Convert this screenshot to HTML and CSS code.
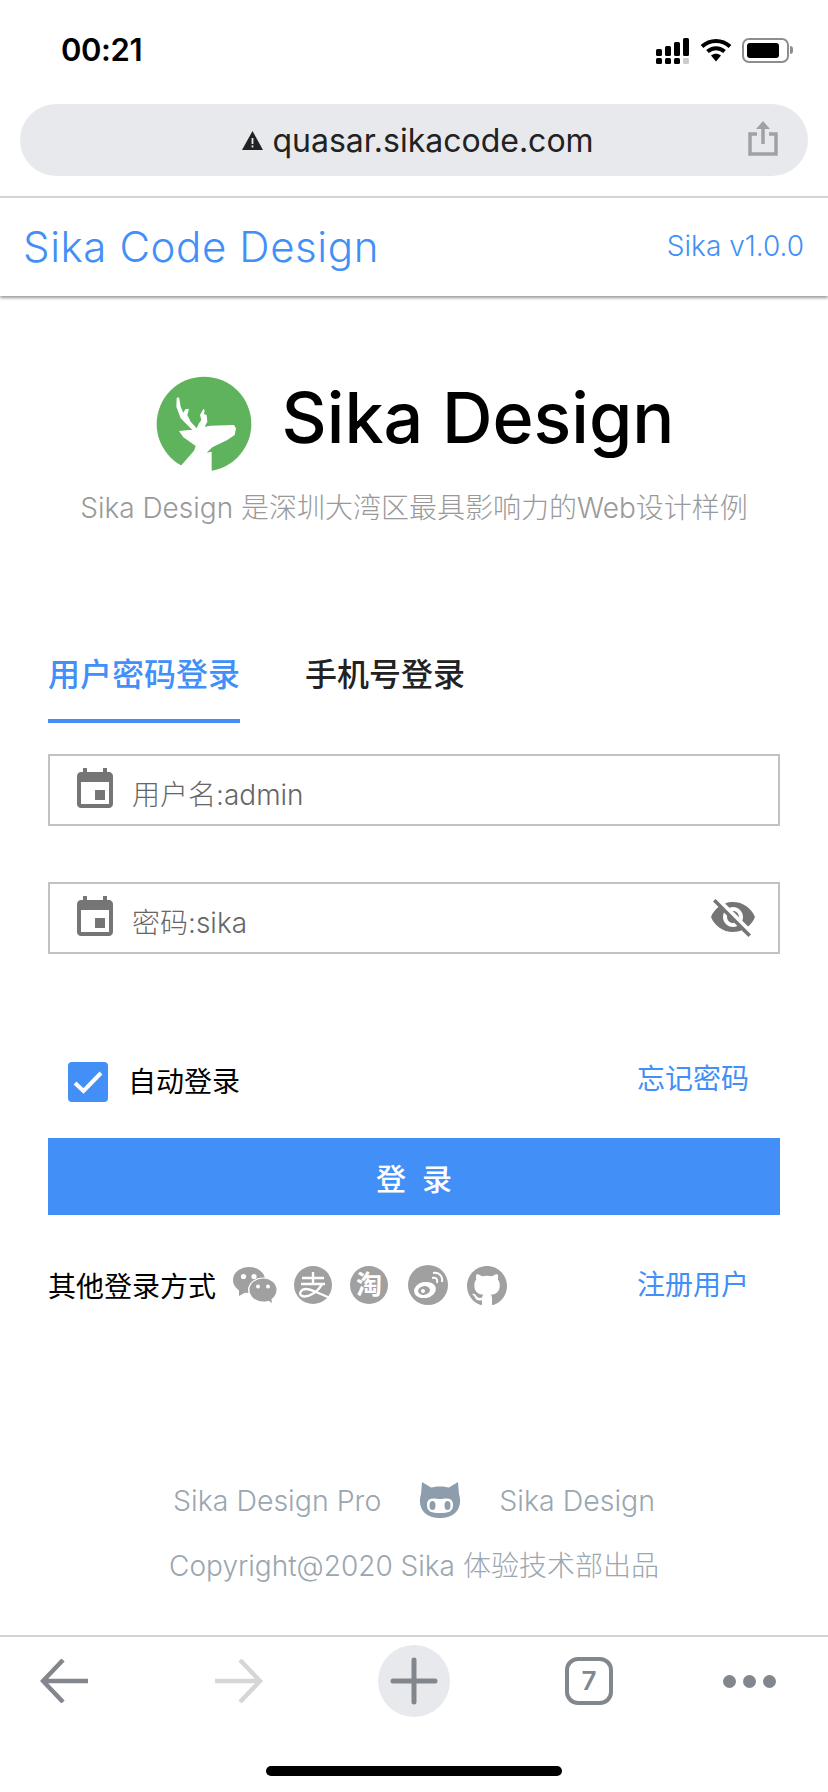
FILE: index.html
```html
<!DOCTYPE html>
<html lang="en">
<head>
    <meta charset="UTF-8">
    <meta name="viewport" content="width=device-width, initial-scale=1.0">
    <title>Sika Design</title>
    <link rel="stylesheet" href="styles.css">
</head>
<body>
    <div class="status-bar">
        <span class="time">00:21</span>
        <div class="status-icons">
            <svg class="signal" width="34" height="26" viewBox="0 0 34 26">
                <g fill="#000">
                    <rect x="0" y="11" width="6" height="7" rx="1.5"/>
                    <rect x="9" y="8" width="6" height="10" rx="1.5"/>
                    <rect x="18" y="4" width="6" height="14" rx="1.5"/>
                    <rect x="27" y="0" width="6" height="18" rx="1.5"/>
                    <rect x="0" y="20" width="6" height="6" rx="1.5"/>
                    <rect x="9" y="20" width="6" height="6" rx="1.5"/>
                    <rect x="18" y="20" width="6" height="6" rx="1.5"/>
                </g>
                <rect x="27" y="20" width="6" height="6" rx="1.5" fill="#ccc"/>
            </svg>
            <svg class="wifi" width="32" height="24" viewBox="0 0 32 24">
                <path d="M2 8.5C10 1 22 1 30 8.5" fill="none" stroke="#000" stroke-width="4"/>
                <path d="M7.5 13.5C12.5 9 19.5 9 24.5 13.5" fill="none" stroke="#000" stroke-width="4"/>
                <path d="M11 17.5L16 23.5L21 17.5C18 15 14 15 11 17.5Z" fill="#000"/>
            </svg>
            <div class="battery"><div class="battery-level"></div></div>
            <div class="battery-tip"></div>
        </div>
    </div>

    <div class="url-bar">
        <div class="url-text">
            <svg width="21" height="19" viewBox="0 0 21 19">
                <path d="M10.5 0L21 19H0Z" fill="#222"/>
                <rect x="9.6" y="7" width="1.8" height="6" fill="#e8e9ed"/>
                <rect x="9.6" y="14.4" width="1.8" height="2" fill="#e8e9ed"/>
            </svg>
            <span>quasar.sikacode.com</span>
        </div>
        <svg class="share" width="30" height="36" viewBox="0 0 30 36">
            <path d="M9 14H2V34H28V14H21" fill="none" stroke="#9ea1a6" stroke-width="3.5"/>
            <path d="M15 24V3" fill="none" stroke="#9ea1a6" stroke-width="3.5"/>
            <path d="M8 9L15 1L22 9Z" fill="#9ea1a6"/>
        </svg>
    </div>

    <header class="app-bar">
        <span class="app-title">Sika Code Design</span>
        <span class="app-version">Sika v1.0.0</span>
    </header>

    <main>
        <div class="brand">
            <svg class="logo" width="96" height="96" viewBox="76 48 288 288">
                <circle cx="220" cy="192" r="142" fill="#5fb35c"/>
                <path d="M138 114L145 112L150 140L158 158L165 147L175 147L170 165L180 185L198 205L205 190L212 180L208 165L218 147L222 150L220 162L228 165L230 185L222 200L240 197L310 195L316 205L312 225L290 240L245 262L228 278L243 275L243 345L130 345L150 318L190 272L195 258L170 240L158 232L145 213L175 210L185 210L150 175L137 140Z" fill="#fff"/>
            </svg>
            <h1 class="brand-name">Sika Design</h1>
        </div>
        <p class="brand-desc">Sika Design 是深圳大湾区最具影响力的Web设计样例</p>

        <div class="tabs">
            <div class="tab tab-active">用户密码登录</div>
            <div class="tab">手机号登录</div>
        </div>

        <div class="field">
            <svg class="field-icon" width="48" height="48" viewBox="0 0 24 24"><path d="M17 12h-5v5h5v-5zM16 1v2H8V1H6v2H5c-1.11 0-1.99.9-1.99 2L3 19c0 1.1.89 2 2 2h14c1.1 0 2-.9 2-2V5c0-1.1-.9-2-2-2h-1V1h-2zm3 18H5V8h14v11z"/></svg>
            <span class="field-text">用户名:admin</span>
        </div>
        <div class="field field-second">
            <svg class="field-icon" width="48" height="48" viewBox="0 0 24 24"><path d="M17 12h-5v5h5v-5zM16 1v2H8V1H6v2H5c-1.11 0-1.99.9-1.99 2L3 19c0 1.1.89 2 2 2h14c1.1 0 2-.9 2-2V5c0-1.1-.9-2-2-2h-1V1h-2zm3 18H5V8h14v11z"/></svg>
            <span class="field-text">密码:sika</span>
            <svg class="eye-icon" width="48" height="48" viewBox="0 0 24 24"><path d="M12 7c2.76 0 5 2.24 5 5 0 .65-.13 1.26-.36 1.83l2.92 2.92c1.51-1.26 2.7-2.89 3.43-4.75-1.73-4.39-6-7.5-11-7.5-1.4 0-2.74.25-3.98.7l2.16 2.16C10.74 7.13 11.35 7 12 7zM2 4.27l2.28 2.28.46.46C3.08 8.3 1.78 10.02 1 12c1.73 4.39 6 7.5 11 7.5 1.55 0 3.03-.3 4.38-.84l.42.42L19.73 22 21 20.73 3.27 3 2 4.27zM7.53 9.8l1.55 1.55c-.05.21-.08.43-.08.65 0 1.66 1.34 3 3 3 .22 0 .44-.03.65-.08l1.55 1.55c-.67.33-1.41.53-2.2.53-2.76 0-5-2.24-5-5 0-.79.2-1.53.53-2.2zm4.31-.78l3.15 3.15.02-.16c0-1.66-1.34-3-3-3l-.17.01z"/></svg>
        </div>

        <div class="remember-row">
            <div class="remember">
                <div class="checkbox">
                    <svg width="30" height="24" viewBox="0 0 30 24"><path d="M2 13L10.5 21L28 3" fill="none" stroke="#fff" stroke-width="4"/></svg>
                </div>
                <span class="remember-label">自动登录</span>
            </div>
            <a class="link link-up">忘记密码</a>
        </div>

        <button class="login-btn" type="button">登 录</button>

        <div class="other-row">
            <span class="other-label">其他登录方式</span>
            <div class="socials">
                <svg class="wechat" width="44" height="36" viewBox="0 0 44 36">
                    <ellipse cx="16" cy="13" rx="16" ry="13" fill="#a0a0a0"/>
                    <path d="M6 21L6 29L15 24Z" fill="#a0a0a0"/>
                    <circle cx="10.5" cy="9.5" r="2.6" fill="#fff"/>
                    <circle cx="21" cy="9.5" r="2.6" fill="#fff"/>
                    <ellipse cx="30" cy="23" rx="15" ry="12.5" fill="#fff"/>
                    <ellipse cx="30" cy="23" rx="13.5" ry="11.5" fill="#a0a0a0"/>
                    <path d="M33 32L39 36L38 30Z" fill="#a0a0a0"/>
                    <circle cx="25" cy="19.5" r="2" fill="#fff"/>
                    <circle cx="35" cy="19.5" r="2" fill="#fff"/>
                </svg>
                <svg class="alipay" width="38" height="38" viewBox="0 0 38 38">
                    <circle cx="19" cy="19" r="19" fill="#a0a0a0"/>
                    <path d="M8 12H30M19 6V18M7 18H31M28 18C24 26 14 32 8 30C4 28 7 23 12 23C18 23 27 29 37 32" fill="none" stroke="#fff" stroke-width="2.4"/>
                </svg>
                <span class="social-glyph">淘</span>
                <svg class="weibo" width="40" height="40" viewBox="0 0 40 40">
                    <circle cx="20" cy="20" r="20" fill="#a0a0a0"/>
                    <ellipse cx="17" cy="25" rx="11" ry="8" fill="#fff" transform="rotate(-10 17 25)"/>
                    <ellipse cx="16" cy="25.5" rx="6" ry="4.4" fill="#a0a0a0" transform="rotate(-10 16 25.5)"/>
                    <circle cx="15" cy="26" r="2" fill="#fff"/>
                    <path d="M24 13C28 12 30 14 29 18" fill="none" stroke="#fff" stroke-width="2"/>
                    <path d="M25 8C31 7 35 11 34 17" fill="none" stroke="#fff" stroke-width="2"/>
                </svg>
                <svg class="github" width="40" height="40" viewBox="0 0 16 16"><path fill="#a0a0a0" d="M8 0C3.58 0 0 3.58 0 8c0 3.54 2.29 6.53 5.47 7.59.4.07.55-.17.55-.38 0-.19-.01-.82-.01-1.49-2.01.37-2.53-.49-2.69-.94-.09-.23-.48-.94-.82-1.13-.28-.15-.68-.52-.01-.53.63-.01 1.08.58 1.23.82.72 1.21 1.87.87 2.33.66.07-.52.28-.87.51-1.07-1.78-.2-3.64-.89-3.64-3.95 0-.87.31-1.59.82-2.15-.08-.2-.36-1.02.08-2.12 0 0 .67-.21 2.2.82.64-.18 1.32-.27 2-.27.68 0 1.36.09 2 .27 1.53-1.04 2.2-.82 2.2-.82.44 1.1.16 1.92.08 2.12.51.56.82 1.27.82 2.15 0 3.07-1.87 3.75-3.65 3.95.29.25.54.73.54 1.48 0 1.07-.01 1.93-.01 2.2 0 .21.15.46.55.38A8.013 8.013 0 0016 8c0-4.42-3.58-8-8-8z"/></svg>
            </div>
            <a class="link">注册用户</a>
        </div>

        <footer class="page-footer">
            <div class="footer-links">
                <span>Sika Design Pro</span>
                <svg width="44" height="38" viewBox="0 0 44 38">
                    <path d="M4 1L13 6.500C18 5 26 5 31 6.500L40 1L41 13C45 26 38 37 22 37C6 37 -1 26 3 13Z" fill="#8d9dab"/>
                    <path d="M9 24C9 17 14 17 22 18C30 17 35 17 35 24C35 31 30 32 22 32C14 32 9 31 9 24Z" fill="#fff"/>
                    <ellipse cx="14.500" cy="24.500" rx="3" ry="4.500" fill="#8d9dab"/>
                    <ellipse cx="29.500" cy="24.500" rx="3" ry="4.500" fill="#8d9dab"/>
                </svg>
                <span>Sika Design</span>
            </div>
            <div class="copyright">Copyright@2020 Sika 体验技术部出品</div>
        </footer>
    </main>

    <nav class="browser-bar">
        <svg class="nav-back" width="48" height="44" viewBox="0 0 48 44"><path d="M48 22H3M23 1L3 22L23 43" fill="none" stroke="#81878c" stroke-width="4.500"/></svg>
        <svg class="nav-forward" width="48" height="44" viewBox="0 0 48 44"><path d="M0 22H45M25 1L45 22L25 43" fill="none" stroke="#d6d6d6" stroke-width="4.500"/></svg>
        <div class="new-tab">
            <svg width="48" height="48" viewBox="0 0 48 48"><path d="M24 3V45M3 24H45" fill="none" stroke="#81878c" stroke-width="5" stroke-linecap="round"/></svg>
        </div>
        <div class="tab-count">7</div>
        <div class="more"><i></i><i></i><i></i></div>
    </nav>
    <div class="home-bar"></div>
</body>
</html>
```

FILE: styles.css
```css
* {
    box-sizing: border-box;
}

body {
    font-family: Inter, "Noto Sans CJK SC", sans-serif;
    background-color: #fff;
    color: #000;
    margin: 0;
    width: 828px;
    height: 1792px;
    overflow: hidden;
}

.status-bar {
    height: 104px;
    padding: 32px 0 0 61px;
    display: flex;
    justify-content: space-between;
}

.time {
    font-size: 31px;
    font-weight: 600;
    line-height: 36px;
    letter-spacing: -0.4px;
}

.status-icons {
    display: flex;
    align-items: flex-start;
    padding: 5px 35px 0 0;
}

.signal {
    margin: 1px 10px 0 0;
}

.wifi {
    margin: 1px 10px 0 0;
}

.battery {
    width: 47px;
    height: 25px;
    margin-top: 1px;
    padding: 3px;
    border: 2px solid #8e8e8e;
    border-radius: 7px;
}

.battery-level {
    width: 32px;
    height: 15px;
    background-color: #000;
    border-radius: 3px;
}

.battery-tip {
    width: 3px;
    height: 8px;
    margin: 9px 0 0 1px;
    background-color: #8e8e8e;
    border-radius: 0 3px 3px 0;
}

.url-bar {
    height: 72px;
    margin: 0 20px;
    padding-right: 30px;
    background-color: #e8e9ed;
    border-radius: 36px;
    display: flex;
    align-items: center;
}

.url-text {
    flex: 1;
    display: flex;
    align-items: center;
    justify-content: center;
    padding-left: 68px;
    gap: 9px;
    font-size: 32px;
    color: #222;
}

.share {
    margin-top: -4px;
}

.app-bar {
    height: 100px;
    margin-top: 20px;
    padding: 0 24px 0 23px;
    border-top: 2px solid #d4d4d4;
    display: flex;
    align-items: center;
    justify-content: space-between;
    color: #428ff7;
    box-shadow: 0 2px 3px rgba(0, 0, 0, 0.4);
}

.app-title {
    font-size: 42px;
    font-weight: 300;
    letter-spacing: 0.6px;
    margin-top: -2px;
}

.app-version {
    font-size: 28px;
    font-weight: 300;
    margin-top: -2px;
}

main {
    height: 1339px;
    padding: 80px 48px 0;
}

.brand {
    display: flex;
    align-items: center;
    justify-content: center;
    gap: 30px;
    padding-left: 2px;
}

.brand-name {
    margin: -12px 0 0;
    font-size: 70px;
    font-weight: 550;
    line-height: 96px;
}

.brand-desc {
    margin: 16px 0 0;
    text-align: center;
    font-size: 28px;
    line-height: 40px;
    font-weight: 300;
    color: #999;
    white-space: nowrap;
}

.tabs {
    margin-top: 111px;
    display: flex;
    gap: 65px;
}

.tab {
    height: 84px;
    padding-top: 12px;
    font-size: 32px;
    line-height: 48px;
    font-weight: 500;
    color: #222;
}

.tab-active {
    color: #428ff7;
    border-bottom: 4px solid #428ff7;
}

.field {
    height: 72px;
    margin-top: 31px;
    padding: 0 21px;
    border: 2px solid #c2c2c2;
    display: flex;
    align-items: center;
}

.field-second {
    margin-top: 56px;
}

.field-icon {
    fill: #757575;
}

.eye-icon {
    fill: #757575;
    margin-left: auto;
    margin-top: -2px;
}

.field-text {
    margin: 6px 0 0 13px;
    font-size: 28px;
    font-weight: 300;
    color: #666;
}

.remember-row {
    height: 80px;
    margin-top: 88px;
    padding: 20px 31px 0 20px;
    display: flex;
    justify-content: space-between;
}

.remember {
    display: flex;
    align-items: center;
    gap: 20px;
    height: 40px;
    font-size: 28px;
}

.remember-label {
    margin-top: -4px;
}

.checkbox {
    width: 40px;
    height: 40px;
    background-color: #428ff7;
    border-radius: 4px;
    display: flex;
    align-items: center;
    justify-content: center;
}

.link {
    font-size: 28px;
    line-height: 40px;
    color: #428ff7;
}

.link-up {
    margin-top: -3px;
}

.login-btn {
    display: block;
    width: 100%;
    height: 77px;
    margin-top: 16px;
    padding-left: 10px;
    border: none;
    background-color: #428ff7;
    color: #fff;
    font-family: inherit;
    font-size: 30px;
    font-weight: 500;
    letter-spacing: 4px;
}

.other-row {
    margin-top: 49px;
    padding-right: 31px;
    height: 42px;
    display: flex;
    align-items: center;
}

.other-label {
    font-size: 28px;
}

.socials {
    display: flex;
    align-items: center;
    gap: 18px;
    margin-left: 17px;
}

.alipay {
    margin-left: -1px;
}

.social-glyph {
    width: 38px;
    height: 38px;
    border-radius: 50%;
    background-color: #a0a0a0;
    color: #fff;
    font-size: 26px;
    font-weight: 700;
    line-height: 38px;
    text-align: center;
}

.weibo {
    margin-left: 2px;
}

.github {
    margin-left: 1px;
    margin-top: 2px;
}

.other-row .link {
    margin-left: auto;
}

.page-footer {
    margin-top: 174px;
    color: #9aa6b0;
    font-size: 28px;
    font-weight: 300;
    text-align: center;
}

.footer-links {
    height: 40px;
    font-size: 28.5px;
    display: flex;
    align-items: center;
    justify-content: center;
    gap: 37px;
}

.copyright {
    margin-top: 26px;
    line-height: 40px;
}

.browser-bar {
    height: 115px;
    padding: 8px 0 33px 40px;
    border-top: 2px solid #d4d4d4;
    display: flex;
    align-items: center;
}

.nav-forward {
    margin-left: 127px;
}

.new-tab {
    width: 72px;
    height: 72px;
    margin-left: 115px;
    border-radius: 50%;
    background-color: #e8e9ed;
    display: flex;
    align-items: center;
    justify-content: center;
}

.tab-count {
    width: 48px;
    height: 48px;
    margin-left: 115px;
    border: 4px solid #81878c;
    border-radius: 13px;
    color: #81878c;
    font-size: 26px;
    font-weight: 600;
    line-height: 40px;
    text-align: center;
}

.more {
    display: flex;
    gap: 7px;
    margin-left: 110px;
}

.more i {
    width: 13px;
    height: 13px;
    border-radius: 50%;
    background-color: #81878c;
}

.home-bar {
    width: 296px;
    height: 10px;
    margin: 16px auto 0;
    background-color: #000;
    border-radius: 5px;
}
```
